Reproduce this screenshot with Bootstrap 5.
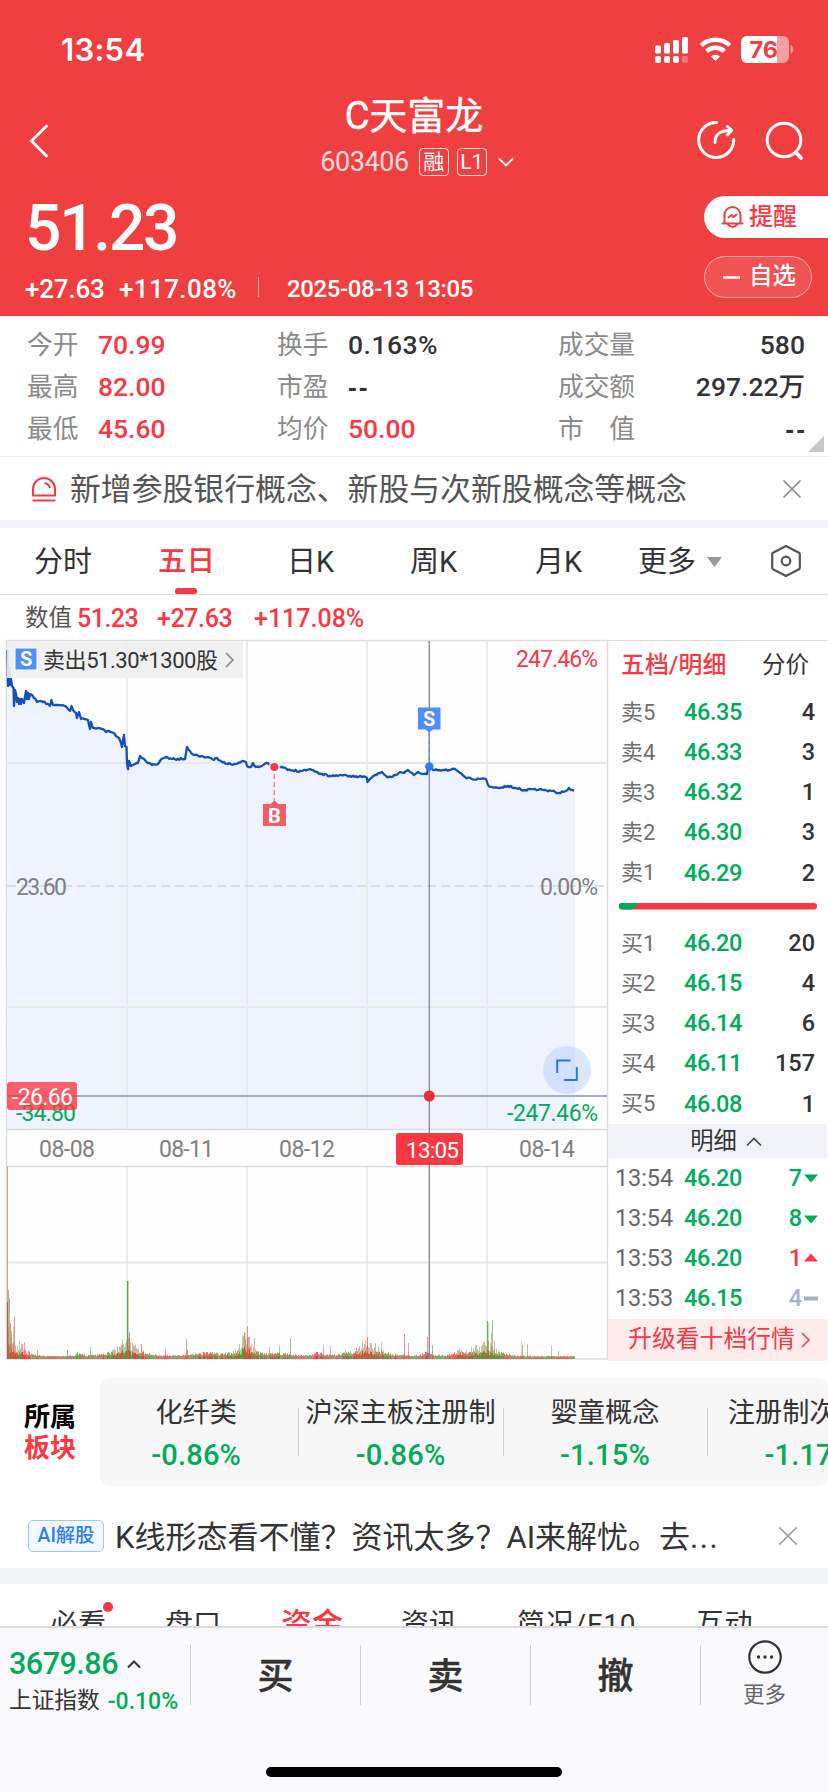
<!DOCTYPE html>
<html lang="zh-CN">
<head>
<meta charset="utf-8">
<meta name="viewport" content="width=device-width, initial-scale=1">
<title>C天富龙 603406</title>
<link href="https://cdn.jsdelivr.net/npm/bootstrap@5.3.0/dist/css/bootstrap.min.css" rel="stylesheet">
<style>
  :root { --up:#f93843; --down:#00ac5c; --ink:#333; --line:#dcdcdc; --band:#f2f3f8; }
  body { width:828px; height:1792px; overflow:hidden; margin:0 auto; background:#fff; color:var(--ink);
         font-family:Roboto,"Noto Sans CJK SC",sans-serif; line-height:1; }
  svg { display:block; flex:none; overflow:visible; }
  .up { color:var(--up); } .down { color:var(--down); }
  .nw { white-space:nowrap; }
  .hero { background:#f03f41; color:#fff; height:316px; }
  .status-row { height:100px; padding:0 34px 0 61px; }
  .clock { font:600 31px/1 Inter,sans-serif; letter-spacing:.3px; margin-top:-2px; }
  .head-row { height:87px; }
  .stock-name { font-size:38px; line-height:40px; font-weight:400; -webkit-text-stroke:.4px #fff; }
  .stock-code { font-size:27px; letter-spacing:-.4px; opacity:.8; }
  .tagbox { border:1.5px solid rgba(255,255,255,.85); border-radius:4px; height:28px; width:30px; font-size:21px; }
  .big-price { font-size:64px; font-weight:500; line-height:64px; letter-spacing:-2.2px; }
  .delta { font-size:26px; font-weight:500; line-height:30px; }
  .pill-remind { width:124px; height:42px; border-radius:21px 0 0 21px; background:#fff; font-size:24px; font-weight:500; padding-left:17px; gap:5px; }
  .pill-fav { width:108px; height:42px; border-radius:21px; border:1.5px solid rgba(255,255,255,.5); background:rgba(255,255,255,.1); font-size:23.5px; font-weight:500; padding-left:17px; gap:8px; }
  .stats { height:140px; padding:8px 23px 6px 27px; font-size:26px; }
  .stat-line { height:42px; }
  .stat-line .k { color:#8a8a8a; font-size:25.7px; padding-top:1px; }
  .stat-line .v { font-weight:500; font-size:26.5px; }
  .stat-line .dash { font-family:"Liberation Sans",sans-serif; font-weight:700; letter-spacing:2px; }
  .notice { height:64px; border-top:1px solid #ececec; font-size:30.85px; color:#555; padding:0 27px 0 31px; }
  .band8 { height:8px; background:var(--band); }
  .period { height:67px; border-bottom:1px solid var(--line); font-size:29px; padding-left:34px; }
  .period > div { position:relative; padding-top:2px; }
  .period .on { font-weight:500; font-size:28.5px; color:var(--up); }
  .period .on::after { content:""; position:absolute; left:17px; bottom:0; width:22px; height:6px; border-radius:3px 3px 2px 2px; background:var(--up); }
  .valrow { height:45px; font-size:25px; padding:2px 0 0 25px; }
  .book { width:220px; height:720px; border-top:1.5px solid var(--line); border-left:1.5px solid var(--line); font-size:24px; }
  .lv { height:40.2px; padding:0 12px 0 13px; }
  .lv .n { width:63px; color:#707070; font-size:22px; font-weight:400; }
  .lv .p { font-weight:500; color:var(--down); letter-spacing:-.4px; font-size:23.5px; }
  .lv .q { margin-left:auto; font-weight:500; font-size:23.5px; }
  .tk { padding:0 9px 0 7px; }
  .tk .n { width:69px; font-size:23.5px; letter-spacing:-.1px; color:#666; }
  .bandbar { height:34px; background:var(--band); font-size:23.3px; }
  .upgrade { height:42px; background:#feeced; color:var(--up); font-size:23.8px; }
  .sector { height:126px; padding-top:18px; }
  .sector-cap { width:100px; font-size:26px; font-weight:700; line-height:31px; padding:2px 0 0 24px; }
  .sector-card { width:728px; height:108px; border-radius:10px; background:#f7f7f7; overflow:hidden; }
  .sector-it { flex:0 0 204.4px; font-size:27.2px; position:relative; padding-top:22px; }
  .sector-it + .sector-it::before { content:""; position:absolute; left:0; top:30px; width:1px; height:48px; background:#cfcfcf; }
  .sector-it .pc { font-size:29px; font-weight:500; margin-top:13px; line-height:30px; letter-spacing:.2px; }
  .ai-row { height:82px; padding:20px 27px 0 28px; }
  .ai-chip { width:76px; height:32px; border:1.5px solid #9fc3fa; border-radius:5px; background:#f3f8ff; color:#2b7ef6; font-size:19.3px; font-weight:500; }
  .ai-text { font-size:31px; margin-left:11px; padding-top:2px; }
  .info-tabs { height:42px; overflow:hidden; font-size:28px; padding-top:26px; line-height:30px; position:relative; }
  .dock { height:166px; background:#fafafc; border-top:2px solid #dcdce0; padding-top:17px; position:relative; }
  .dock-idx { width:190px; padding-left:9px; }
  .dock-btn { flex:0 0 170px; height:60px; border-left:1px solid #d0d0d4; font-size:36px; font-weight:500; -webkit-text-stroke:.4px #333; padding-top:3px; }
  .dock-more { flex:1; height:60px; border-left:1px solid #d0d0d4; font-size:21.5px; color:#666; }
  .home-bar { position:absolute; left:266px; bottom:15px; width:296px; height:10px; border-radius:5px; background:#000; }
</style>
</head>
<body>

<header class="hero">
  <div class="status-row d-flex align-items-center justify-content-between">
    <div class="clock">13:54</div>
    <svg width="140" height="30" viewBox="0 0 140 30" fill="#fff" style="margin-right:-1px">
      <g><rect x="0" y="10.500" width="6" height="8" rx="1.500"/><rect x="9" y="8" width="6" height="10.500" rx="1.500"/><rect x="18" y="5" width="6" height="13.500" rx="1.500"/><rect x="27" y="2" width="6" height="16.500" rx="1.500"/>
      <rect x="0" y="21" width="6" height="7" rx="2"/><rect x="9" y="21" width="6" height="7" rx="2"/><rect x="18" y="21" width="6" height="7" rx="2"/><rect x="27" y="21" width="6" height="7" rx="2" opacity=".3"/></g>
      <g fill="none" stroke="#fff" stroke-width="4.500"><path d="M46.300 10.500a20.500 20.500 0 0 1 28.400 0"/><path d="M51.600 16.300a13 13 0 0 1 17.800 0"/></g>
      <path d="M60.500 26l-4.600-4.400a6.600 6.600 0 0 1 9.200 0z"/>
      <path d="M92 1h30v27H92a6 6 0 0 1-6-6V7a6 6 0 0 1 6-6z"/><path d="M122 1h6a6 6 0 0 1 6 6v15a6 6 0 0 1-6 6h-6z" opacity=".5"/><path d="M136 10.500a5.500 5.500 0 0 1 0 8z" opacity=".5" stroke="#fff"/>
      <text x="94.500" y="23" font-family="Inter" font-weight="700" font-size="23.500" fill="#f03f41" textLength="28.500">76</text>
    </svg>
  </div>
  <div class="head-row d-flex justify-content-between">
    <svg width="60" height="60" style="margin-top:10px"><path d="M46.500 16L31.500 31l15 15" fill="none" stroke="#fff" stroke-width="2.800" stroke-linecap="round"/></svg>
    <div class="d-flex flex-column align-items-center" style="margin:-4px 0 0 80px">
      <div class="stock-name">C天富龙</div>
      <div class="d-flex align-items-center" style="margin:12px 0 0 6px">
        <span class="stock-code">603406</span>
        <span class="tagbox d-flex align-items-center justify-content-center" style="margin-left:10px">融</span>
        <span class="tagbox d-flex align-items-center justify-content-center" style="margin-left:8px">L1</span>
        <svg width="16" height="10" style="margin-left:11px"><path d="M1 1.500l7 7 7-7" fill="none" stroke="#fff" stroke-width="1.800"/></svg>
      </div>
    </div>
    <svg width="140" height="60" viewBox="688 110 140 60" style="margin-top:10px" fill="none" stroke="#fff" stroke-width="3" stroke-linecap="round" stroke-linejoin="round">
      <path d="M716.500 122.500a17.500 17.500 0 1 0 17.200 17"/><path d="M715 142.500c0-8 4-12 15.500-12"/><path d="M727.500 126.500l4.200 4-4.200 4.200"/>
      <circle cx="784" cy="140" r="16.800"/><path d="M796 152.500l5 5.500" stroke-width="3.800"/>
    </svg>
  </div>
  <div class="d-flex justify-content-between">
    <div style="padding:10px 0 0 25px">
      <div class="big-price">51.23</div>
      <div class="delta d-flex align-items-center nw" style="margin-top:13px">
        <span style="width:94px;letter-spacing:-.2px">+27.63</span><span style="width:139px;letter-spacing:.4px">+117.08%</span>
        <span style="width:29px;height:20px;border-left:1px solid rgba(255,255,255,.6);margin-top:-5px"></span>
        <span style="font-size:24px;letter-spacing:-.4px;margin-top:-1px">2025-08-13 13:05</span>
      </div>
    </div>
    <div class="d-flex flex-column" style="padding-top:9px;gap:18px">
      <div class="pill-remind up d-flex align-items-center">
        <svg width="23" height="24" viewBox="0 0 23 24" fill="none" stroke="#f03f41" stroke-width="2" stroke-linecap="round" stroke-linejoin="round"><path d="M3.500 18V10a8 8 0 0 1 16 0v8M1.500 18.500h20M7 19.500q4.500 5 9 0M7.500 12.500l3-2.500 2 2 3-2.500"/></svg>提醒</div>
      <div class="pill-fav d-flex align-items-center"><svg width="19" height="3"><path d="M1 1.500h17" stroke="#fff" stroke-width="2.500"/></svg>自选</div>
    </div>
  </div>
</header>

<section class="stats">
  <div class="stat-line d-flex align-items-center nw"><span class="k" style="width:71px">今开</span><span class="v up" style="width:179px">70.99</span><span class="k" style="width:71px">换手</span><span class="v" style="letter-spacing:.500px">0.163%</span><span class="k ms-auto" style="width:77px">成交量</span><span class="v text-end" style="width:170px">580</span></div>
  <div class="stat-line d-flex align-items-center nw"><span class="k" style="width:71px">最高</span><span class="v up" style="width:179px">82.00</span><span class="k" style="width:71px">市盈</span><span class="v dash">--</span><span class="k ms-auto" style="width:77px">成交额</span><span class="v text-end" style="width:170px">297.22万</span></div>
  <div class="stat-line d-flex align-items-center nw"><span class="k" style="width:71px">最低</span><span class="v up" style="width:179px">45.60</span><span class="k" style="width:71px">均价</span><span class="v up">50.00</span><span class="k ms-auto" style="width:77px">市　值</span><span class="v dash text-end" style="width:172px;margin-right:-2px">--</span></div>
  <svg width="16" height="16" class="ms-auto" style="margin-top:-14px;margin-right:-19px"><path d="M16 0v16H0z" fill="#c8c8c8"/></svg>
</section>

<section class="notice d-flex align-items-center">
  <svg width="26" height="26" viewBox="0 0 26 26" fill="none" stroke="#f93843" stroke-width="2"><path d="M2 19.500V13a11 11 0 0 1 22 0v6.500zM1.500 24.500h23M13.500 7q4.500.800 5.500 5"/></svg>
  <span style="margin-left:13px;padding-top:3px" class="nw">新增参股银行概念、新股与次新股概念等概念</span>
  <svg class="ms-auto" width="18" height="18"><path d="M.5.500l17 17m0-17l-17 17" stroke="#888" stroke-width="1.700"/></svg>
</section>
<div class="band8"></div>

<nav class="period d-flex align-items-stretch nw">
  <div class="d-flex align-items-center" style="width:124px">分时</div>
  <div class="on d-flex align-items-center" style="width:129px">五日</div>
  <div class="d-flex align-items-center" style="width:123px">日K</div>
  <div class="d-flex align-items-center" style="width:125px">周K</div>
  <div class="d-flex align-items-center" style="width:103px">月K</div>
  <div class="d-flex align-items-center" style="width:132px;gap:11px">更多<svg width="15" height="10"><path d="M0 0h15l-7.500 10z" fill="#999"/></svg></div>
  <div class="d-flex align-items-center pt-0"><svg width="32" height="34" viewBox="0 0 32 34" fill="none" stroke="#555" stroke-width="2.200" stroke-linejoin="round"><path d="M16 2l13 6.800q.8.500.8 1.500v13.400q0 1-.8 1.500L16 32 3 25.200q-.8-.5-.8-1.500V10.300q0-1 .8-1.500z"/><circle cx="16" cy="17" r="4.300"/></svg></div>
</nav>

<div class="valrow d-flex align-items-center up nw" style="font-weight:500">
  <span style="font-size:23.500px;color:#555;width:52px;font-weight:400">数值</span><span style="width:80px;letter-spacing:-.5px">51.23</span><span style="width:97px;letter-spacing:-.4px">+27.63</span><span style="letter-spacing:0">+117.08%</span>
</div>

<main class="d-flex">
  <svg id="chart" width="607" height="720" viewBox="0 640 607 720" font-family="Roboto,'Noto Sans CJK SC',sans-serif" font-size="23"></svg>
  <aside class="book">
    <div class="d-flex align-items-center nw" style="height:51px;padding-left:13px;padding-bottom:2px;margin-bottom:.5px"><span class="up" style="font-weight:500;width:141px;font-size:23.900px;letter-spacing:.1px">五档/明细</span><span style="font-size:23.500px">分价</span></div>
    <div id="asks"></div>
    <div style="height:30px;padding:10px 0 0 11px"><svg width="198" height="7"><rect width="198" height="6.500" rx="3.200" fill="#f93843"/><path d="M3 0h18l-8 6.500H3a3.200 3.200 0 0 1 0-6.500z" fill="#00ac5c"/></svg></div>
    <div id="bids"></div>
    <div class="bandbar d-flex align-items-center justify-content-center" style="gap:9px;padding-left:17px">明细<svg width="16" height="9"><path d="M1 8.500l7-7 7 7" fill="none" stroke="#444" stroke-width="1.600"/></svg></div>
    <div id="ticks"></div>
    <div class="upgrade d-flex align-items-center justify-content-center nw" style="gap:6px;padding-left:3px">升级看十档行情<svg width="9" height="16"><path d="M1 1l7 7-7 7" fill="none" stroke="#f93843" stroke-width="1.500"/></svg></div>
  </aside>
</main>

<section class="sector d-flex">
  <div class="sector-cap d-flex flex-column justify-content-center"><div class="text-black">所属</div><div class="up">板块</div></div>
  <div class="sector-card"><div class="d-flex text-center nw" style="margin-left:-6px">
    <div class="sector-it">化纤类<div class="pc down">-0.86%</div></div>
    <div class="sector-it">沪深主板注册制<div class="pc down">-0.86%</div></div>
    <div class="sector-it">婴童概念<div class="pc down">-1.15%</div></div>
    <div class="sector-it">注册制次新股<div class="pc down">-1.17%</div></div>
  </div></div>
</section>

<section class="ai-row"><div class="d-flex align-items-center" style="height:62px;margin-top:-1px">
  <span class="ai-chip d-flex align-items-center justify-content-center nw">AI解股</span>
  <span class="ai-text nw">K线形态看不懂？资讯太多？AI来解忧。去<span style="letter-spacing:1.500px">...</span></span>
  <svg class="ms-auto" width="18" height="18" style="margin-right:4px"><path d="M.5.500l17 17m0-17l-17 17" stroke="#999" stroke-width="1.700"/></svg>
</div></section>
<div class="band8" style="height:16px"></div>

<nav class="info-tabs d-flex nw" style="padding-left:50px">
  <span class="position-relative" style="width:115px">必看<svg class="position-absolute" width="10" height="10" style="left:53px;top:-8px"><circle cx="5" cy="5" r="5" fill="#f93843"/></svg></span>
  <span style="width:116px">盘口</span><span class="up" style="width:120px;font-weight:500;font-size:31px">资金</span>
  <span style="width:116px">资讯</span><span style="width:179px;letter-spacing:.8px">简况/F10</span><span style="letter-spacing:.5px">互动</span>
</nav>

<footer class="dock"><div class="d-flex">
  <div class="dock-idx nw">
    <div class="d-flex align-items-center down" style="font-size:30.500px;font-weight:500;height:38px;gap:9px;letter-spacing:-.500px">3679.86<svg width="14" height="8"><path d="M1 7.500l6-6 6 6" fill="none" stroke="#333" stroke-width="2"/></svg></div>
    <div class="d-flex align-items-center" style="font-size:22.700px;margin-top:6px;height:24px;gap:8px">上证指数<span class="down" style="font-weight:500;font-size:23px">-0.10%</span></div>
  </div>
  <div class="dock-btn d-flex align-items-center justify-content-center">买</div>
  <div class="dock-btn d-flex align-items-center justify-content-center">卖</div>
  <div class="dock-btn d-flex align-items-center justify-content-center">撤</div>
  <div class="dock-more d-flex flex-column align-items-center"><svg width="34" height="34" viewBox="0 0 34 34" style="margin-top:-5px"><circle cx="17" cy="17" r="15.700" fill="none" stroke="#333" stroke-width="2.200"/><g fill="#333"><circle cx="10.500" cy="17" r="1.700"/><circle cx="17" cy="17" r="1.700"/><circle cx="23.500" cy="17" r="1.700"/></g></svg><span style="margin-top:10px">更多</span></div>
</div><div class="home-bar"></div></footer>

<script src="https://cdn.jsdelivr.net/npm/bootstrap@5.3.0/dist/js/bootstrap.bundle.min.js"></script>
<script>
  const row = (n, p, q) => `<div class="lv d-flex align-items-center"><span class="n">${n}</span><span class="p">${p}</span><span class="q">${q}</span></div>`;
  asks.innerHTML = [['卖5','46.35',4],['卖4','46.33',3],['卖3','46.32',1],['卖2','46.30',3],['卖1','46.29',2]].map(r => row(...r)).join('');
  bids.innerHTML = [['买1','46.20',20],['买2','46.15',4],['买3','46.14',6],['买4','46.11',157],['买5','46.08',1]].map(r => row(...r)).join('');
  const marks = { d:['#00ac5c','M0 3.500h14l-7 8z'], u:['#f93843','M0 9.500h14l-7-8z'], f:['#a8b1bc','M0 4.500h14v4H0z'] };
  ticks.innerHTML = [['13:54','46.20',7,'d'],['13:54','46.20',8,'d'],['13:53','46.20',1,'u'],['13:53','46.15',4,'f']].map(([t,p,q,m]) =>
    `<div class="lv tk d-flex align-items-center"><span class="n">${t}</span><span class="p">${p}</span><span class="q d-flex align-items-center" style="color:${marks[m][0]};gap:2px">${q}<svg width="14" height="14"><path d="${marks[m][1]}" fill="${marks[m][0]}"/></svg></span></div>`).join('');

  // Five-day price line, as x,y pairs
  const price = '7.5,650 8,686 9,668 10,685 11,679 12,686 13.5,688 14,706 15,690 16,694 17,702 18,698 19,704 20,699 21,704 22,699 24,703 25,697 26,691 27,699 28,693 29,699 30,694 32,695 34,698 37,702 40,701 43,702 48,704 50,706 51.5,700 53,705 58,705 65,706 68,709 70,711 71.5,706 73,710 76,713 77,718 79,712 81,719 84,719 88,720 89,725 90,729 91,722 93,728 98,728 102,729 106,732 109,731 114,733 116,736 119,738 121,743 122,747 123,740 124,735 125,746 126.5,747 127,763 128,769 129,761 131,766 135,764 138,763 140,756 142,758 145,760 148,763 152,765 158,764 160,761 164,758 166,757 172,759 185,759 187,747 190,751 194,755 202,756 208,757 214,760 217,758 221,761 228,764 236,764 242,761 246,762 247,766 251,767 253,763 256,767 262,766 268,763 272,766 274,767 282,767 288,770 300,771 310,769 316,772 322,774 330,776 340,775 350,776 362,777 367,778 367.5,782 370,779 375,775 380,773 382,772 386,776 391,777 396,775 400,772 404,773 408,770 410,772 414,775 418,772 422,774 427,774 428,768 429,766 433,770 440,770 450,770 455,769 460,773 465,777 472,779 480,779 486,779 488,785 492,787 500,788 508,786 515,788 525,790 535,789 545,790 552,791 559,793 566,791 569,788 574,791'.split(' ').map(p => p.split(',').map(Number));
  let seed = 11; const rnd = () => (seed = (seed * 16807) % 2147483647) / 2147483647;
  const pts = [];
  price.forEach((p, i) => {
    pts.push(p);
    const q = price[i + 1]; if (!q) return;
    for (let x = p[0] + 1.5; x < q[0] - 1; x += 1.5) pts.push([x, p[1] + (q[1] - p[1]) * (x - p[0]) / (q[0] - p[0]) + (rnd() - .5) * 2]);
  });
  const line = pts.map(p => p[0].toFixed(1) + ',' + p[1].toFixed(1)).join(' ');

  // Volume bars: low base plus the session peaks [x, height, colour]
  const G = '#5b9b38', R = '#f93843';
  const env = x => { let h = 3; [[7,32,6],[22,9,7],[127,17,12],[247,17,8],[367,15,12],[487,15,10],[125,8,5],[243,14,5],[208,5,14],[365,8,12],[427,6,5],[460,6,8],[476,6,8],[78,4,4],[318,5,4],[280,4,14]].forEach(([c,a,w]) => { h += a * Math.exp(-Math.abs(x - c) / w); }); return h; };
  let bars = '';
  for (let x = 7; x < 575; x += 1) {
    const h = 2 + (env(x) - 2) * (.35 + rnd() * .75), c = rnd() < .55 ? G : R;
    bars += `<path d="M${x + .5} 1359v${-h.toFixed(1)}" stroke="${c}" stroke-opacity="${h > 8 ? .5 : .8}"/>`;
    if (h > 5) bars += `<path d="M${x + .5} 1359v${-(h * .45).toFixed(1)}" stroke="${c}"/>`;
  }
  [[7,193,R,.55],[7,57,R,1],[8,69,G,.6],[9,61,G,.6],[10,36,R,.6],[11,28,G,.6],[14,42,R,.6],[13,32,G,.4],[19,18,G,.4],[24,17,R,.5],[37,9,R,.5],[67,9,G,.7],[90,12,G,.5],[112,9,G,.5],[122,15,G,.4],[127,78,G,.9],[128,78,G,.4],[129,27,R,.6],[141,15,R,.6],[165,10,R,.5],[186,20,R,.6],[187,9,G,.7],[244,26,R,.3],[245,26,R,.3],[247,33,G,.6],[248,22,R,.5],[254,21,R,.4],[269,12,R,.5],[279,13,G,.5],[290,21,G,.6],[323,14,R,.5],[330,13,G,.5],[345,10,G,.4],[367,22,R,.6],[375,16,G,.5],[381,17,G,.4],[404,25,R,.6],[408,16,R,.5],[427,22,R,.6],[432,14,G,.6],[487,38,G,.8],[488,37,G,.35],[491,26,G,.5],[492,39,G,.6],[494,18,R,.5],[521,18,G,.3],[522,14,R,.5],[527,15,G,.5],[551,13,G,.5],[558,8,G,.5]].forEach(([x,h,c,o]) => bars += `<path d="M${x + .5} 1359v${-h}" stroke="${c}" stroke-opacity="${o}"/>`);

  const t = (x, y, s, w, fill, extra = '') => `<text x="${x}" y="${y}" textLength="${w}" fill="${fill}" ${extra}>${s}</text>`;
  const days = [127, 247, 367, 487];
  chart.innerHTML = `
    <rect x="6.500" y="640.500" width="601" height="718.500" fill="#fefefe" stroke="#dcdcdc" stroke-width="1.400"/>
    <polygon points="7,1129 ${line} 575,791 575,1129" fill="#eff3fe"/>
    <g stroke="#e8e8ea" stroke-width="1.800">${days.map(x => `<path d="M${x} 641V1129M${x} 1166V1359"/>`).join('')}<path d="M7 763H607M7 1007H607M7 1262.500H607"/></g>
    <path d="M7 886H607" stroke="#d5dde8" stroke-width="2" stroke-dasharray="9 5"/>
    <polyline points="${line}" fill="none" stroke="#164fb8" stroke-width="2.300" stroke-linejoin="round"/>
    <path d="M7 1129.500H607M7 1166.500H607" stroke="#dcdcdc" stroke-width="1.400"/>
    <g stroke-width="1">${bars}</g>
    <path d="M7 1096H607" stroke="#a8adbb" stroke-width="2"/><path d="M429.300 641V1359" stroke="#82868e" stroke-width="1.300"/>
    <rect x="7" y="641" width="236" height="37" fill="#eee" fill-opacity=".9"/>
    <rect x="15" y="648" width="22" height="22" fill="#4f8efb" stroke="#fff"/>${t(20,666,'S',12,'#fff','font-weight="700" font-size="20"')}
    ${t(43,668,'卖出51.30*1300股',175,'#333','font-size="22" font-weight="400"')}
    <path d="M226 653l7 7-7 7" fill="none" stroke="#888" stroke-width="1.600"/>
    ${t(516,667,'247.46%',82,'#f93843')}${t(16,894.500,'23.60',51,'#808080')}${t(540,894.500,'0.00%',58,'#808080')}
    ${t(16,1121,'-34.80',60,'#00ac5c')}${t(507,1121,'-247.46%',91,'#00ac5c')}
    <rect x="7" y="1082" width="70" height="28" rx="3" fill="#f93843" fill-opacity=".8"/>${t(12,1105,'-26.66',61,'#fff')}
    <path d="M274.300 774V802" stroke="#f7848c" stroke-width="1.400" stroke-dasharray="5 3"/><circle cx="274.300" cy="767" r="6" fill="#fff" opacity=".7"/><circle cx="274.300" cy="767" r="4" fill="#f93843"/>
    <path d="M263 804h7.500l4-3.500 4 3.500h7.500v22h-23z" fill="#f65c68"/>${t(268,822.500,'B',13,'#fff','font-weight="700" font-size="20"')}
    <path d="M429.300 732V763" stroke="#4f8efb" stroke-width="1.400" stroke-dasharray="5 3"/><circle cx="429.300" cy="766.500" r="4.200" fill="#2b7ef6"/>
    <path d="M418 707.500h22.500v22h-7.500l-3.700 3-3.800-3H418z" fill="#4f8efb"/>${t(423,725.500,'S',12.500,'#fff','font-weight="700" font-size="20"')}
    <circle cx="567" cy="1070" r="24" fill="#b9d0fb" fill-opacity=".5"/><path d="M557.200 1073V1060.500H570.500M576.800 1067V1080H564" fill="none" stroke="#2377f7" stroke-width="2"/>
    <circle cx="429.300" cy="1096" r="5.500" fill="#e02f38"/>
    ${t(39,1157,'08-08',56,'#808080')}${t(159,1157,'08-11',55,'#808080')}${t(279,1157,'08-12',56,'#808080')}${t(519,1157,'08-14',56,'#808080')}
    <rect x="396" y="1133" width="67" height="32" rx="3" fill="#f93843"/>${t(406,1158,'13:05',53,'#fff','font-size="22.500"')}`;
</script>
</body>
</html>
